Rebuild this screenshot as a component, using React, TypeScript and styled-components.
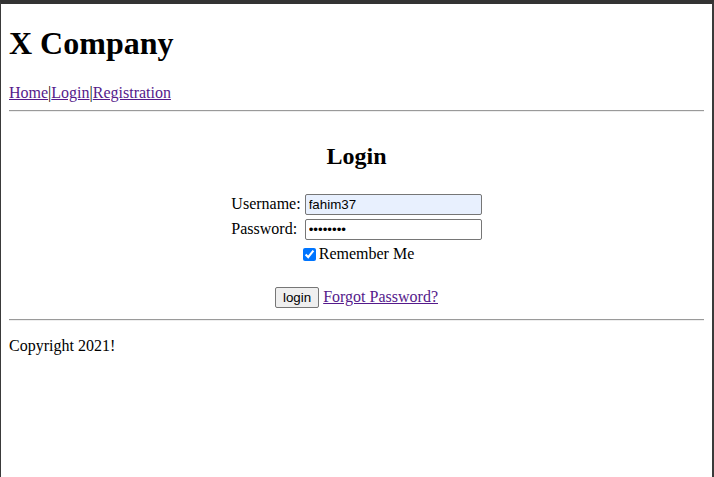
import styled, { createGlobalStyle } from 'styled-components';

const GlobalStyle = createGlobalStyle`
  html, body {
    margin: 0;
    padding: 0;
    background: #ffffff;
  }
  body {
    font-family: 'Liberation Serif', 'Times New Roman', serif;
    font-size: 16px;
    color: #000;
  }
`;

const Window = styled.div`
  box-sizing: border-box;
  height: 100vh;
  border-top: 4px solid #333333;
  border-left: 1px solid #3a3a3a;
  border-right: 2px solid #3a3a3a;
  background: #ffffff;
`;

const Page = styled.div`
  margin: 8px;
`;

const Title = styled.h1`
  font-size: 32px;
  font-weight: bold;
  margin: 21.44px 0;
`;

const Nav = styled.div`
  line-height: normal;
`;

const NavLink = styled.a`
  color: #551a8b;
  text-decoration: underline;
`;

const Rule = styled.hr`
  margin: 8px 0;
  border: none;
  border-top: 1px solid #9a9a9a;
  border-bottom: 1px solid #eeeeee;
  height: 0;
`;

const FormTable = styled.table`
  margin: 0 auto;
  border-spacing: 2px;
  border-collapse: separate;
`;

const Cell = styled.td<{ $center?: boolean; $gap?: number }>`
  padding: 1px;
  padding-top: ${({ $gap }) => ($gap ? `${$gap}px` : '1px')};
  text-align: ${({ $center }) => ($center ? 'center' : 'left')};
  vertical-align: middle;
`;

const Heading = styled.h2`
  font-size: 24px;
  font-weight: bold;
  margin: 19.92px 0;
`;

const Field = styled.input<{ $autofill?: boolean }>`
  box-sizing: border-box;
  width: 177px;
  height: 21px;
  padding: 1px 3px;
  border: 1px solid #767676;
  border-radius: 2px;
  background: ${({ $autofill }) => ($autofill ? '#e8f0fe' : '#ffffff')};
  font-family: 'Liberation Sans', Arial, sans-serif;
  font-size: 13.33px;
  color: #000;
  outline: none;
`;

const Check = styled.input`
  margin: 3px 3px 3px 4px;
  width: 13px;
  height: 13px;
  vertical-align: -2px;
  accent-color: #0075ff;
`;

const Button = styled.button`
  font-family: 'Liberation Sans', Arial, sans-serif;
  font-size: 13.33px;
  padding: 1px 7px;
  height: 21px;
  border: 1px solid #767676;
  border-radius: 2px;
  background: #efefef;
  color: #000;
`;

const Footer = styled.p`
  margin: 16px 0;
`;

export default function App() {
  return (
    <>
      <GlobalStyle />
      <Window>
        <Page>
          <Title>X Company</Title>
          <Nav>
            <NavLink href="#home">Home</NavLink>|<NavLink href="#login">Login</NavLink>|
            <NavLink href="#registration">Registration</NavLink>
          </Nav>
          <Rule />
          <form onSubmit={(e) => e.preventDefault()}>
            <FormTable>
              <tbody>
                <tr>
                  <Cell colSpan={2} $center>
                    <Heading>Login</Heading>
                  </Cell>
                </tr>
                <tr>
                  <Cell>Username:</Cell>
                  <Cell>
                    <Field type="text" defaultValue="fahim37" $autofill />
                  </Cell>
                </tr>
                <tr>
                  <Cell>Password:</Cell>
                  <Cell>
                    <Field type="password" defaultValue="12345678" />
                  </Cell>
                </tr>
                <tr>
                  <Cell colSpan={2} $center $gap={2}>
                    <Check type="checkbox" defaultChecked />
                    Remember Me
                  </Cell>
                </tr>
                <tr>
                  <Cell colSpan={2} $center $gap={20}>
                    <Button type="submit">login</Button>{' '}
                    <NavLink href="#forgot">Forgot Password?</NavLink>
                  </Cell>
                </tr>
              </tbody>
            </FormTable>
          </form>
          <Rule />
          <Footer>Copyright 2021!</Footer>
        </Page>
      </Window>
    </>
  );
}
